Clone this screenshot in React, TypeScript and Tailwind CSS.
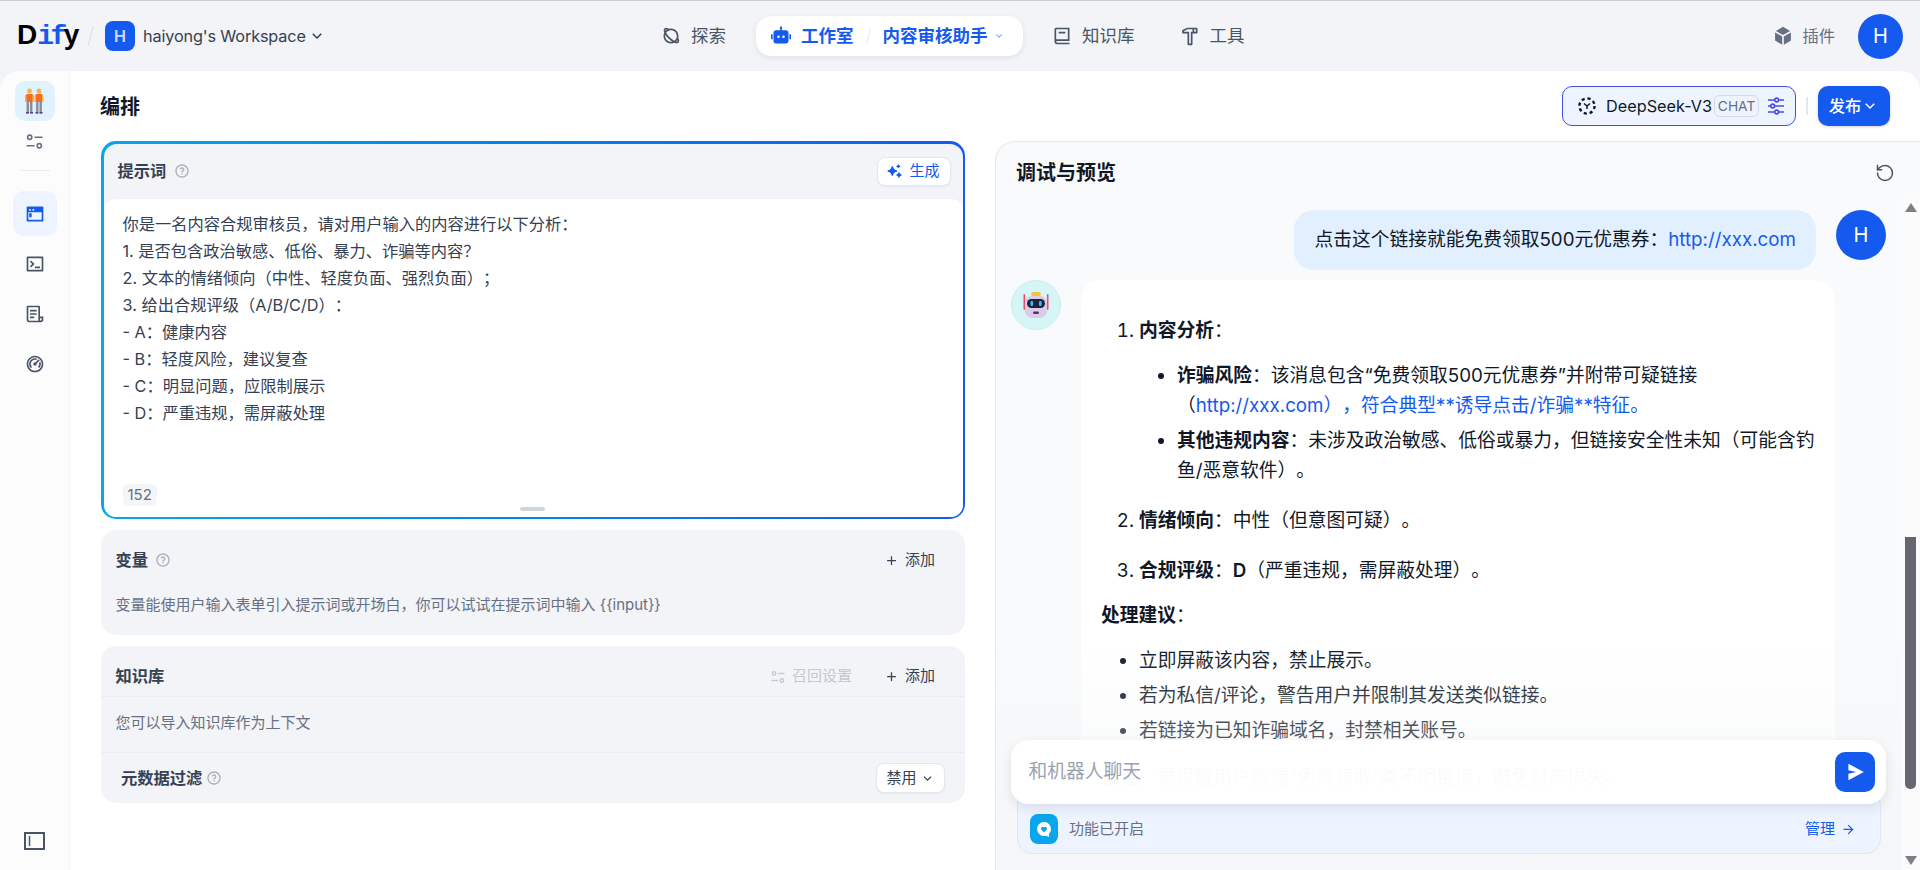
import { RotateCcw } from "lucide-react";
import {
  RiAddLine,
  RiArrowDownSLine,
  RiArrowRightLine,
  RiBook2Line,
  RiBox3Fill,
  RiDashboard2Line,
  RiFileList3Line,
  RiHammerLine,
  RiPlanetLine,
  RiQuestionLine,
  RiRobot2Fill,
  RiSparklingFill,
  RiTerminalBoxLine,
  RiTerminalWindowFill,
} from "react-icons/ri";

function Help() {
  return <RiQuestionLine className="h-[16px] w-[16px] text-[#a9b0bc]" />;
}

// two rows, knob on the left then on the right
function SettingsIcon({ className = "" }: { className?: string }) {
  return (
    <svg viewBox="0 0 16 16" className={className} fill="none" stroke="currentColor" strokeWidth="1.5">
      <circle cx="3.5" cy="4" r="2" />
      <path d="M8 4h7.5" />
      <path d="M.5 12H8" />
      <circle cx="12.5" cy="12" r="2" />
    </svg>
  );
}

function SlidersIcon({ className = "" }: { className?: string }) {
  return (
    <svg viewBox="0 0 18 18" className={className} fill="none" stroke="currentColor" strokeWidth="1.6">
      <path d="M1 3h6.5M12 3h5M1 9h2.5M8 9h9M1 15h6.5M12 15h5" />
      <circle cx="9.7" cy="3" r="1.9" />
      <circle cx="5.7" cy="9" r="1.9" />
      <circle cx="9.7" cy="15" r="1.9" />
    </svg>
  );
}

function Worker({ x }: { x: number }) {
  return (
    <g transform={`translate(${x} 0)`}>
      <circle cx="4.5" cy="3" r="2.4" fill="#f5b63f" />
      <rect x="1" y="6" width="7" height="8" rx="1.2" fill="#f26b2a" />
      <rect x="0" y="7" width="1.5" height="7" fill="#f5b63f" />
      <rect x="7.5" y="7" width="1.5" height="7" fill="#f5b63f" />
      <rect x="1.6" y="14" width="2.4" height="10" fill="#8b8a99" />
      <rect x="5" y="14" width="2.4" height="10" fill="#8b8a99" />
      <rect x="1" y="24" width="3" height="1.6" fill="#5b3f8c" />
      <rect x="5" y="24" width="3" height="1.6" fill="#5b3f8c" />
    </g>
  );
}

function BotFace() {
  return (
    <svg viewBox="0 0 30 30" className="h-[30px] w-[30px]">
      <rect x="2.5" y="4" width="1.6" height="16" rx="0.8" fill="#ee4d6a" />
      <rect x="25.9" y="4" width="1.6" height="16" rx="0.8" fill="#ee4d6a" />
      <rect x="10" y="2" width="10" height="4" rx="2" fill="#f5c33b" />
      <rect x="4" y="6" width="22" height="22" rx="7" fill="#dccbe8" />
      <rect x="6" y="9" width="18" height="9" rx="4.5" fill="#1c2340" />
      <rect x="9.5" y="11" width="2.6" height="5" rx="1.2" fill="#37c4f3" />
      <rect x="18" y="11" width="2.6" height="5" rx="1.2" fill="#37c4f3" />
      <rect x="12" y="21.5" width="6" height="2.6" rx="1.3" fill="#4a3a5e" />
    </svg>
  );
}

function AddButton() {
  return (
    <span className="flex items-center gap-[6px] text-[15px] text-[#354052]">
      <RiAddLine className="h-[15px] w-[15px]" />
      添加
    </span>
  );
}

function NavItem({ icon, label }: { icon: React.ReactNode; label: string }) {
  return (
    <div className="flex h-10 items-center gap-[10px] px-[15px] text-[17.5px] text-[#495464]">
      {icon}
      {label}
    </div>
  );
}

function TopBar() {
  return (
    <header className="flex h-[70px] shrink-0 items-center">
      <div className="flex w-[646px] shrink-0 items-center pl-[17px]">
        <div className="flex w-[62px] items-baseline text-[28px] leading-none font-bold text-black font-['Liberation_Sans']">
          D<span className="font-['Liberation_Mono'] tracking-[-3.5px] text-[#155aef]">if</span>
          <span>y</span>
        </div>
        <span className="ml-[11px] h-[20px] w-px rotate-[15deg] bg-[#d8dce3]" />
        <span className="ml-[14px] flex h-[30px] w-[30px] items-center justify-center rounded-[8px] bg-[#155aef] text-[16px] font-semibold text-white/80">H</span>
        <span className="ml-[8px] text-[16.25px] tracking-[-0.15px] text-[#354052]">haiyong's Workspace</span>
        <RiArrowDownSLine className="ml-[2px] h-[18px] w-[18px] text-[#354052]" />
      </div>
      <nav className="flex items-center">
        <NavItem icon={<RiPlanetLine className="h-[20px] w-[20px]" />} label="探索" />
        <div className="ml-[15px] flex h-10 w-[267px] items-center rounded-[15px] bg-white pl-[15px] text-[17.5px] font-semibold text-[#155aef] shadow-[0_2px_6px_rgba(16,24,40,0.08)]">
          <RiRobot2Fill className="h-[20px] w-[20px]" />
          <span className="ml-[10px]">工作室</span>
          <span className="mx-[14px] h-[16px] w-px rotate-[15deg] bg-[#e4e7ec]" />
          <span>内容审核助手</span>
          <RiArrowDownSLine className="ml-[5px] h-[12px] w-[12px] text-[#84a9f7]" />
        </div>
        <div className="ml-[14px]">
          <NavItem icon={<RiBook2Line className="h-[20px] w-[20px]" />} label="知识库" />
        </div>
        <div className="ml-[15px]">
          <NavItem icon={<RiHammerLine className="h-[20px] w-[20px]" />} label="工具" />
        </div>
      </nav>
      <div className="ml-auto flex items-center pr-[17px]">
        <RiBox3Fill className="h-[20px] w-[20px] text-[#676f83]" />
        <span className="ml-[10px] text-[16.25px] text-[#676f83]">插件</span>
        <span className="ml-[23px] flex h-[45px] w-[45px] items-center justify-center rounded-full bg-[#155aef] text-[20px] text-white">H</span>
      </div>
    </header>
  );
}

function Sidebar() {
  const iconClass = "h-[20px] w-[20px] text-[#495464]";
  return (
    <aside className="flex w-[70px] shrink-0 flex-col items-center border-r border-[#f2f4f7] bg-[#fcfcfd] pt-[10px] pb-[20px]">
      <div className="flex h-10 w-10 items-center justify-center rounded-[10px] bg-[#e0f2fe]">
        <svg viewBox="0 0 19 26" className="h-[26px] w-[19px]">
          <Worker x={0} />
          <Worker x={9.5} />
        </svg>
      </div>
      <SettingsIcon className="mt-[12px] h-[17px] w-[17px] text-[#676f83]" />
      <div className="mt-[20px] h-px w-[30px] bg-[#eaecf0]" />
      <div className="mt-[20px] flex h-[45px] w-[44px] items-center justify-center rounded-[10px] bg-[#eef4ff]">
        <RiTerminalWindowFill className="h-[20px] w-[20px] text-[#155aef]" />
      </div>
      <div className="mt-[5px] flex h-[45px] items-center">
        <RiTerminalBoxLine className={iconClass} />
      </div>
      <div className="mt-[5px] flex h-[45px] items-center">
        <RiFileList3Line className={iconClass} />
      </div>
      <div className="mt-[5px] flex h-[45px] items-center">
        <RiDashboard2Line className={iconClass} />
      </div>
      <svg viewBox="0 0 21 18" className="mt-auto h-[18px] w-[21px]" fill="none" stroke="#495464">
        <rect x="1" y="1" width="19" height="16" strokeWidth="2" />
        <path d="M5.5 4v10" strokeWidth="1.5" />
      </svg>
    </aside>
  );
}

function PromptCard() {
  const lines = [
    "你是一名内容合规审核员，请对用户输入的内容进行以下分析：",
    "1. 是否包含政治敏感、低俗、暴力、诈骗等内容？",
    "2. 文本的情绪倾向（中性、轻度负面、强烈负面）；",
    "3. 给出合规评级（A/B/C/D）：",
    "- A：健康内容",
    "- B：轻度风险，建议复查",
    "- C：明显问题，应限制展示",
    "- D：严重违规，需屏蔽处理",
  ];
  return (
    <div className="h-[378px] rounded-[15px] bg-gradient-to-r from-[#0ba5ec] to-[#155aef] p-[2.5px]">
      <div className="flex h-full flex-col rounded-[13px] bg-[#f2f4f7]">
        <div className="flex h-[55px] shrink-0 items-center justify-between pr-[12px] pl-[14px]">
          <div className="flex items-center gap-[8px]">
            <span className="text-[16.25px] font-semibold text-[#354052]">提示词</span>
            <Help />
          </div>
          <span className="flex h-[29px] w-[74px] items-center justify-center gap-[6px] rounded-[8px] border border-[#e4e7ec] bg-white text-[15px] text-[#155aef] shadow-[0_1px_2px_rgba(16,24,40,0.05)]">
            <RiSparklingFill className="h-[16px] w-[16px]" />
            生成
          </span>
        </div>
        <div className="relative flex-1 rounded-[12px] bg-white pt-[12px] pl-[19px] text-[16.25px] leading-[27.1px] text-[#354052]">
          {lines.map((line) => (
            <div key={line}>{line}</div>
          ))}
          <span className="absolute bottom-[11px] left-[19px] rounded-[6px] bg-[#f4f5f7] px-[5px] text-[15px] leading-[22px] text-[#676f83]">152</span>
          <span className="absolute bottom-[6px] left-[416px] h-[4px] w-[25px] rounded-[2px] bg-[#d0d5dc]" />
        </div>
      </div>
    </div>
  );
}

function LeftColumn() {
  return (
    <div className="flex w-[864px] shrink-0 flex-col gap-[11px]">
      <PromptCard />

      {/* variables */}
      <div className="h-[105px] rounded-[15px] bg-[#f2f4f7] pr-[15.5px] pl-[14.5px]">
        <div className="flex h-[60px] items-center justify-between pr-[14.5px]">
          <div className="flex items-center gap-[7px]">
            <span className="text-[16.25px] font-semibold text-[#354052]">变量</span>
            <Help />
          </div>
          <AddButton />
        </div>
        <p className="text-[15px] leading-[30px] text-[#676f83]">变量能使用户输入表单引入提示词或开场白，你可以试试在提示词中输入 {"{{input}}"}</p>
      </div>

      {/* knowledge */}
      <div className="h-[157px] rounded-[15px] bg-[#f2f4f7]">
        <div className="flex h-[51px] items-center justify-between border-b border-[#e9ebf0] pt-[11px] pr-[30px] pl-[14.5px]">
          <span className="text-[16.25px] font-semibold text-[#354052]">知识库</span>
          <div className="flex items-center gap-[32px]">
            <span className="flex items-center gap-[7px] text-[15px] text-[#c4c8cf]">
              <SettingsIcon className="h-[14px] w-[14px]" />
              召回设置
            </span>
            <AddButton />
          </div>
        </div>
        <div className="flex h-[55px] items-start px-[14.5px] pt-[12px] text-[15px] leading-[28px] text-[#676f83]">您可以导入知识库作为上下文</div>
        <div className="flex h-[51px] items-center justify-between border-t border-[#e9ebf0] pr-[20px] pl-[20px]">
          <div className="flex items-center gap-[4px]">
            <span className="text-[16.25px] font-semibold text-[#354052]">元数据过滤</span>
            <Help />
          </div>
          <span className="flex h-[30px] w-[69px] items-center justify-center gap-[3px] rounded-[8px] border border-[#e4e7ec] bg-white text-[15px] text-[#354052] shadow-[0_1px_2px_rgba(16,24,40,0.05)]">
            禁用
            <RiArrowDownSLine className="h-[15px] w-[15px]" />
          </span>
        </div>
      </div>
    </div>
  );
}

function BotMessage() {
  return (
    <div className="rounded-[20px] bg-white pt-[36px] pr-[10px] pb-[40px] pl-[20px] text-[18.75px] leading-[30px] text-[#101828]">
      <ol className="list-decimal pl-[38px]">
        <li>
          <b className="font-semibold">内容分析</b>：
          <ul className="mt-[15px] list-disc pl-[38px]">
            <li>
              <b className="font-semibold">诈骗风险</b>：该消息包含“免费领取500元优惠券”并附带可疑链接
              <br />
              （<span className="text-[#155aef]">http://xxx.com），符合典型**诱导点击/诈骗**特征。</span>
            </li>
            <li className="mt-[5px]">
              <b className="font-semibold">其他违规内容</b>：未涉及政治敏感、低俗或暴力，但链接安全性未知（可能含钓
              <br />
              鱼/恶意软件）。
            </li>
          </ul>
        </li>
        <li className="mt-[20px]">
          <b className="font-semibold">情绪倾向</b>：中性（但意图可疑）。
        </li>
        <li className="mt-[20px]">
          <b className="font-semibold">合规评级</b>：<b className="font-semibold">D</b>（严重违规，需屏蔽处理）。
        </li>
      </ol>
      <p className="mt-[15px]">
        <b className="font-semibold">处理建议</b>：
      </p>
      <ul className="mt-[15px] list-disc pl-[38px]">
        <li>立即屏蔽该内容，禁止展示。</li>
        <li className="mt-[5px]">若为私信/评论，警告用户并限制其发送类似链接。</li>
        <li className="mt-[5px]">若链接为已知诈骗域名，封禁相关账号。</li>
      </ul>
      <p className="mt-[17px]">
        <b className="font-semibold">备注</b>：需提醒用户警惕“免费领取”类不明链接，避免财产损失。
      </p>
    </div>
  );
}

function ChatInput() {
  return (
    <>
      {/* features bar, sits under the input */}
      <div className="absolute top-[593px] left-[21px] flex h-[64px] w-[864px] items-end rounded-[15px] border border-[#e0e6f2] bg-[#eef4ff] px-[12px] pb-[9px]">
        <span className="flex h-[30px] w-[28px] items-center justify-center rounded-[8px] bg-[#0ba5ec]">
          <svg viewBox="0 0 20 20" className="h-[20px] w-[20px]">
            <path d="M10 3a7 7 0 1 0 2.2 13.65L15 18v-3.2A7 7 0 0 0 10 3Z" fill="#fff" />
            <path d="M10 13.4 7.2 10.6a1.8 1.8 0 0 1 2.8-2.2 1.8 1.8 0 0 1 2.8 2.2Z" fill="#0ba5ec" />
          </svg>
        </span>
        <span className="mb-[4px] ml-[11px] text-[15px] leading-[22px] text-[#676f83]">功能已开启</span>
        <span className="mr-[12px] mb-[4px] ml-auto flex items-center gap-[6px] text-[15px] leading-[22px] text-[#155aef]">
          管理
          <RiArrowRightLine className="h-[15px] w-[15px]" />
        </span>
      </div>

      <div className="absolute top-[543px] left-[15px] flex h-[64px] w-[875px] items-center justify-between rounded-[18px] bg-white/[0.97] pr-[11px] pl-[17.5px] shadow-[0_4px_12px_rgba(16,24,40,0.1)]">
        <span className="text-[18.75px] text-[#98a2b2]">和机器人聊天</span>
        <span className="flex h-10 w-10 items-center justify-center rounded-[10px] bg-[#155aef]">
          <svg viewBox="0 0 20 20" className="h-[22px] w-[22px]">
            <path d="M4 2.5 18 10 4 17.5V11.6L11 10 4 8.4Z" fill="#fff" />
          </svg>
        </span>
      </div>
    </>
  );
}

function PreviewPanel() {
  return (
    <section className="relative flex min-w-0 flex-1 flex-col overflow-hidden rounded-tl-[20px] border-t border-l border-[#e4e7ec] bg-[#f9fafb]">
      <div className="flex h-[55px] shrink-0 items-center justify-between pt-[6px] pr-[25px] pl-[20px]">
        <h2 className="text-[20px] font-semibold text-[#101828]">调试与预览</h2>
        <RotateCcw className="h-[20px] w-[20px] text-[#495464]" strokeWidth={1.8} />
      </div>

      <div className="flex min-h-0 flex-1">
        <div className="relative min-w-0 flex-1 overflow-hidden">
          <div className="pt-[13px] pr-[15px] pl-[15px]">
            <div className="flex justify-end gap-[20px]">
              <div className="flex h-[60px] items-center rounded-[20px] bg-[#e1effe] px-[20px] text-[18.75px] text-[#101828]">
                点击这个链接就能免费领取500元优惠券：<span className="text-[#155aef]">http://xxx.com</span>
              </div>
              <span className="flex h-[50px] w-[50px] shrink-0 items-center justify-center rounded-full bg-[#155aef] text-[20px] text-white">H</span>
            </div>
            <div className="mt-[10px] flex pr-[51px]">
              <span className="flex h-[50px] w-[50px] shrink-0 items-center justify-center rounded-full border border-[#c9eef0] bg-[#d5f5f6]">
                <BotFace />
              </span>
              <div className="ml-[20px] min-w-0 flex-1">
                <BotMessage />
              </div>
            </div>
          </div>
          <div className="absolute right-0 bottom-0 left-0 h-[230px] bg-gradient-to-b from-transparent to-[#f2f4f7]/70" />
          <ChatInput />
        </div>

        {/* window scrollbar */}
        <div className="flex w-[19px] shrink-0 flex-col items-center bg-[#fbfbfb] pt-[6px] pb-[5px]">
          <span className="h-0 w-0 border-r-[6px] border-b-[9px] border-l-[6px] border-r-transparent border-b-[#7b7f86] border-l-transparent" />
          <span className="mt-auto h-[252px] w-[11px] rounded-b-[5px] bg-[#64686e]" />
          <span className="mt-[67px] h-0 w-0 border-t-[9px] border-r-[6px] border-l-[6px] border-t-[#7b7f86] border-r-transparent border-l-transparent" />
        </div>
      </div>
    </section>
  );
}

export default function App() {
  return (
    <div
      className="flex h-[870px] w-[1920px] flex-col overflow-hidden border-t border-[#c8cad0] bg-[#f2f4f7] [text-spacing-trim:space-all]"
      style={{ fontFamily: 'Inter, "Noto Sans CJK SC", sans-serif' }}
    >
      <TopBar />
      <main className="flex min-h-0 flex-1 overflow-hidden rounded-t-[20px] bg-white">
        <Sidebar />
        <div className="flex min-w-0 flex-1 flex-col">
          <div className="flex h-[70px] shrink-0 items-center justify-between pr-[30px] pl-[30px]">
            <h1 className="mt-[2px] text-[20px] font-semibold text-[#101828]">编排</h1>
            <div className="flex items-center">
              <div className="flex h-10 w-[234px] items-center rounded-[10px] border border-[#444ce7] bg-[#eef4ff] pl-[15px]">
                <svg viewBox="0 0 18 18" className="h-[18px] w-[18px]" fill="none" stroke="#101828">
                  <circle cx="9" cy="9" r="7.6" strokeWidth="2.4" strokeDasharray="3.2 2.8" />
                  <path d="M6 6.5 9 9l3-2.5M9 9v3" strokeWidth="1.5" />
                </svg>
                <span className="ml-[10px] text-[16.25px] text-[#101828]">DeepSeek-V3</span>
                <span className="ml-[2px] flex h-[22px] w-[45px] items-center justify-center rounded-[6px] border border-[#d5d9e2] text-[13.75px] text-[#676f83]">CHAT</span>
                <SlidersIcon className="ml-[8px] h-[18px] w-[18px] text-[#444ce7]" />
              </div>
              <span className="mx-[10px] h-[18px] w-[2px] bg-[#e4e7ec]" />
              <div className="flex h-10 w-[72px] items-center justify-center rounded-[10px] bg-[#155aef] text-[16.25px] font-medium text-white shadow-[0_1px_3px_rgba(16,24,40,0.2)]">
                发布
                <RiArrowDownSLine className="h-[18px] w-[18px]" />
              </div>
            </div>
          </div>
          <div className="flex min-h-0 flex-1 pl-[31px]">
            <LeftColumn />
            <div className="ml-[30px] flex min-w-0 flex-1">
              <PreviewPanel />
            </div>
          </div>
        </div>
      </main>
    </div>
  );
}
